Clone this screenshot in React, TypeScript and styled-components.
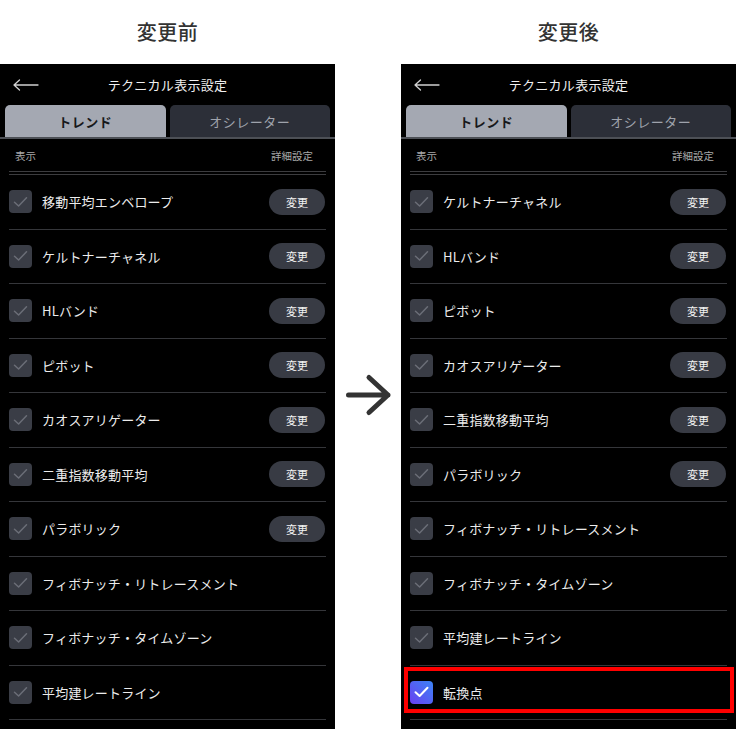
import React from 'react';
import styled, { createGlobalStyle } from 'styled-components';

const GlobalStyle = createGlobalStyle`
  html, body {
    margin: 0;
    padding: 0;
    background: #ffffff;
  }
  body {
    font-family: "Noto Sans CJK JP", "Noto Sans", sans-serif;
  }
`;

const Page = styled.div`
  display: grid;
  grid-template-columns: 335px 66px 335px;
  grid-template-rows: 64px 665px;
  width: 737px;
  height: 729px;
  overflow: hidden;
`;

const Heading = styled.h2`
  margin: 0;
  display: flex;
  align-items: center;
  justify-content: center;
  padding-bottom: 1px;
  font-size: 20px;
  font-weight: 500;
  color: #333333;
  letter-spacing: 0.5px;
`;

const ArrowCell = styled.div`
  display: flex;
  align-items: center;
  justify-content: center;
  padding-bottom: 3px;
`;

const Phone = styled.section`
  background: #000000;
  display: flex;
  flex-direction: column;
  overflow: hidden;
`;

const TopBar = styled.header`
  height: 41px;
  display: grid;
  grid-template-columns: 48px 1fr 48px;
  align-items: center;
  color: #f0f0f0;
  font-size: 13px;
`;

const BackButton = styled.span`
  display: flex;
  align-items: center;
  padding-left: 13px;
  height: 100%;
`;

const Title = styled.h1`
  margin: 0;
  text-align: center;
  font-size: 13px;
  font-weight: 400;
  letter-spacing: 0.3px;
`;

const Tabs = styled.nav`
  display: flex;
  gap: 4px;
  padding: 0 5px;
  height: 32px;
  border-bottom: 2px solid #4d5056;
`;

const Tab = styled.div<{ $active?: boolean }>`
  flex: 1;
  display: flex;
  align-items: center;
  justify-content: center;
  border-radius: 5px 5px 0 0;
  background: ${(p) => (p.$active ? '#a4a8b2' : '#2c2f38')};
  color: ${(p) => (p.$active ? '#17181b' : '#9fa3ac')};
  font-size: 13px;
  font-weight: ${(p) => (p.$active ? 700 : 400)};
  letter-spacing: 0.5px;
`;

const SubHeader = styled.div`
  height: 32px;
  display: flex;
  align-items: center;
  justify-content: space-between;
  padding: 0 22px 0 15px;
  font-size: 10.5px;
  color: #a9a9a9;
`;

const DoubleRule = styled.div`
  margin: 0 9px;
  height: 4px;
  box-sizing: border-box;
  border-top: 1px solid #3c3c3f;
  border-bottom: 1px solid #3c3c3f;
`;

const List = styled.ul`
  margin: 0 9px;
  padding: 0;
  list-style: none;
`;

const Row = styled.li<{ $highlight?: boolean }>`
  position: relative;
  box-sizing: border-box;
  height: 54.5px;
  display: flex;
  align-items: center;
  gap: 10px;
  padding-right: 1px;
  border-bottom: 1px solid #35363a;

  ${(p) =>
    p.$highlight &&
    `
    &::after {
      content: '';
      position: absolute;
      top: 1px;
      bottom: 6px;
      left: -6px;
      right: -7px;
      border: 4px solid #ff0000;
      pointer-events: none;
    }
  `}
`;

const Check = styled.span<{ $on?: boolean }>`
  width: 23px;
  height: 23px;
  flex: 0 0 23px;
  border-radius: 4px;
  display: flex;
  align-items: center;
  justify-content: center;
  background: ${(p) =>
    p.$on ? 'linear-gradient(45deg, #6a3ff0 0%, #3b84f6 100%)' : '#3a3d46'};
`;

const Label = styled.span`
  font-size: 13px;
  color: #ececec;
  letter-spacing: 0.2px;
`;

const ChangeButton = styled.button`
  margin-left: auto;
  width: 56px;
  height: 26px;
  border: none;
  border-radius: 13px;
  background: #383b44;
  color: #f2f2f2;
  font-family: inherit;
  font-size: 11px;
  padding: 0;
`;

const BackArrow = () => (
  <svg width="26" height="12" viewBox="0 0 26 12" fill="none">
    <path d="M1 6H25M6.5 1L1 6L6.5 11" stroke="#d0d0d0" strokeWidth="1.3" strokeLinecap="round" strokeLinejoin="round" />
  </svg>
);

const BigArrow = () => (
  <svg width="48" height="44" viewBox="0 0 48 44" fill="none">
    <path d="M4.5 22H44M25 4.5L44 22L25 39.5" stroke="#333333" strokeWidth="5" strokeLinecap="round" strokeLinejoin="round" />
  </svg>
);

const CheckMark = ({ on }: { on?: boolean }) => (
  <svg width="15" height="12" viewBox="0 0 15 12" fill="none">
    <path
      d="M1.5 6.2L5.6 10L13.5 1.8"
      stroke={on ? '#ffffff' : '#6b6e77'}
      strokeWidth={on ? 2 : 1.5}
      strokeLinecap="round"
      strokeLinejoin="round"
    />
  </svg>
);

interface Item {
  label: string;
  editable?: boolean;
  checked?: boolean;
  highlight?: boolean;
}

const beforeItems: Item[] = [
  { label: '移動平均エンベロープ', editable: true },
  { label: 'ケルトナーチャネル', editable: true },
  { label: 'HLバンド', editable: true },
  { label: 'ピボット', editable: true },
  { label: 'カオスアリゲーター', editable: true },
  { label: '二重指数移動平均', editable: true },
  { label: 'パラボリック', editable: true },
  { label: 'フィボナッチ・リトレースメント' },
  { label: 'フィボナッチ・タイムゾーン' },
  { label: '平均建レートライン' },
];

const afterItems: Item[] = [
  { label: 'ケルトナーチャネル', editable: true },
  { label: 'HLバンド', editable: true },
  { label: 'ピボット', editable: true },
  { label: 'カオスアリゲーター', editable: true },
  { label: '二重指数移動平均', editable: true },
  { label: 'パラボリック', editable: true },
  { label: 'フィボナッチ・リトレースメント' },
  { label: 'フィボナッチ・タイムゾーン' },
  { label: '平均建レートライン' },
  { label: '転換点', checked: true, highlight: true },
];

const PhoneScreen: React.FC<{ items: Item[] }> = ({ items }) => (
  <Phone>
    <TopBar>
      <BackButton>
        <BackArrow />
      </BackButton>
      <Title>テクニカル表示設定</Title>
      <span />
    </TopBar>
    <Tabs>
      <Tab $active>トレンド</Tab>
      <Tab>オシレーター</Tab>
    </Tabs>
    <SubHeader>
      <span>表示</span>
      <span>詳細設定</span>
    </SubHeader>
    <DoubleRule />
    <List>
      {items.map((item) => (
        <Row key={item.label} $highlight={item.highlight}>
          <Check $on={item.checked}>
            <CheckMark on={item.checked} />
          </Check>
          <Label>{item.label}</Label>
          {item.editable && <ChangeButton>変更</ChangeButton>}
        </Row>
      ))}
    </List>
  </Phone>
);

export default function App() {
  return (
    <>
      <GlobalStyle />
      <Page>
        <Heading>変更前</Heading>
        <div />
        <Heading>変更後</Heading>
        <PhoneScreen items={beforeItems} />
        <ArrowCell>
          <BigArrow />
        </ArrowCell>
        <PhoneScreen items={afterItems} />
      </Page>
    </>
  );
}
